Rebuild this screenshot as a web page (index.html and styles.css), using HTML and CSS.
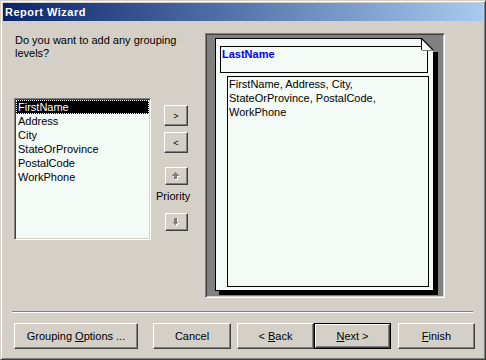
FILE: index.html
```html
<!DOCTYPE html>
<html lang="en">
<head>
    <meta charset="UTF-8">
    <title>Report Wizard</title>
    <link rel="stylesheet" href="styles.css">
</head>
<body>
    <div class="window">
        <div class="titlebar">Report Wizard</div>
        <div class="dialog">
            <div class="main">
                <div class="left">
                    <div class="question">Do you want to add any grouping<br>levels?</div>
                    <div class="picker">
                        <ul class="listbox">
                            <li class="selected"><span>FirstName</span></li>
                            <li>Address</li>
                            <li>City</li>
                            <li>StateOrProvince</li>
                            <li>PostalCode</li>
                            <li>WorkPhone</li>
                        </ul>
                        <div class="controls">
                            <button class="btn small add">&gt;</button>
                            <button class="btn small remove">&lt;</button>
                            <button class="btn arrow up">
                                <svg width="9" height="8" viewBox="0 0 9 8" shape-rendering="crispEdges">
                                    <polygon points="4.5,1 8,4.5 6,4.5 6,8 3,8 3,4.5 1,4.5" fill="#fff"/>
                                    <polygon points="3.5,0 7,3.5 5,3.5 5,7 2,7 2,3.5 0,3.5" fill="#808080"/>
                                </svg>
                            </button>
                            <div class="priority">Priority</div>
                            <button class="btn arrow down">
                                <svg width="9" height="8" viewBox="0 0 9 8" shape-rendering="crispEdges">
                                    <polygon points="3,1 6,1 6,4.5 8,4.5 4.5,8 1,4.5 3,4.5" fill="#fff"/>
                                    <polygon points="2,0 5,0 5,3.5 7,3.5 3.5,7 0,3.5 2,3.5" fill="#808080"/>
                                </svg>
                            </button>
                        </div>
                    </div>
                </div>
                <div class="preview">
                    <div class="page">
                        <svg class="fold" width="17" height="17" viewBox="0 0 17 17" shape-rendering="crispEdges">
                            <polygon points="0,0 17,0 17,14 12,14 12,12" fill="#808080"/>
                            <polygon points="0,0 12,12 0,12" fill="#fff"/>
                            <line x1="0" y1="0" x2="12" y2="12" stroke="#000" stroke-width="1.2" shape-rendering="auto"/>
                            <rect x="0" y="0" width="1" height="12" fill="#000"/>
                            <rect x="1" y="12" width="12" height="1" fill="#808080"/>
                        </svg>
                        <div class="group-header">LastName</div>
                        <div class="detail">FirstName, Address, City,<br>StateOrProvince, PostalCode,<br>WorkPhone</div>
                    </div>
                </div>
            </div>
            <div class="separator"></div>
            <div class="footer">
                <button class="btn wide options"><span>Grouping <u>O</u>ptions ...</span></button>
                <button class="btn wide cancel"><span>Cancel</span></button>
                <button class="btn wide back"><span>&lt; <u>B</u>ack</span></button>
                <button class="btn wide next">
                    <span class="inner"><span><u>N</u>ext &gt;</span></span>
                </button>
                <button class="btn wide finish"><span><u>F</u>inish</span></button>
            </div>
        </div>
    </div>
</body>
</html>
```

FILE: styles.css
```css
html, body {
    margin: 0;
    padding: 0;
    background: #d4d0c8;
}
body {
    font-family: 'Liberation Sans', Arial, sans-serif;
    font-size: 11px;
    color: #000;
}
.window {
    box-sizing: border-box;
    width: 486px;
    height: 360px;
    padding: 2px;
    background: #d4d0c8;
    border: 1px solid;
    border-color: #d4d0c8 #404040 #404040 #d4d0c8;
    box-shadow: inset 1px 1px #fff, inset -1px -1px #808080;
}
.titlebar {
    height: 18px;
    line-height: 18px;
    padding-left: 2px;
    color: #fff;
    font-weight: bold;
    letter-spacing: 0.5px;
    background: linear-gradient(to right, #0a246a, #a6caf0);
}
.main {
    display: flex;
    margin-top: 12px;
    padding-left: 11px;
}
.left {
    width: 191px;
    padding-top: 1px;
}
.question {
    padding-left: 1px;
    line-height: 13px;
}
.picker {
    display: flex;
    margin-top: 38px;
}
.listbox {
    box-sizing: border-box;
    width: 137px;
    height: 142px;
    margin: 0;
    list-style: none;
    background: #f4faf6;
    border: 1px solid;
    border-color: #808080 #fff #fff #808080;
    box-shadow: inset 1px 1px #404040, inset -1px -1px #d4d0c8;
    padding: 1px;
}
.listbox li {
    height: 14px;
    line-height: 14px;
    padding-left: 2px;
    white-space: nowrap;
}
.listbox li.selected {
    background: #000;
    color: #fff;
    outline: 1px dotted #fff;
    outline-offset: -1px;
}
.controls {
    display: flex;
    flex-direction: column;
    align-items: flex-start;
    width: 24px;
    margin-left: 13px;
}
.btn {
    box-sizing: border-box;
    display: flex;
    align-items: center;
    justify-content: center;
    padding: 0;
    margin: 0;
    font-family: inherit;
    font-size: 11px;
    color: #000;
    background: #d4d0c8;
    border: 1px solid;
    border-color: #fff #404040 #404040 #fff;
    box-shadow: inset -1px -1px #808080;
}
.btn.small {
    width: 24px;
    height: 21px;
    font-size: 9px;
}
.btn.add {
    margin-top: 7px;
}
.btn.remove {
    margin-top: 6px;
}
.btn.arrow {
    width: 23px;
    height: 18px;
    margin-left: 1px;
}
.btn.up {
    margin-top: 14px;
}
.priority {
    margin-top: 5px;
    margin-left: -8px;
    line-height: 13px;
}
.btn.down {
    margin-top: 10px;
}
.preview {
    box-sizing: border-box;
    width: 240px;
    height: 265px;
    padding: 4px 0 0 9px;
    background: #808080;
    border: 1px solid;
    border-color: #808080 #fff #fff #808080;
    box-shadow: inset 1px 1px #404040, inset -1px -1px #d4d0c8;
}
.page {
    position: relative;
    box-sizing: border-box;
    width: 219px;
    height: 253px;
    padding: 7px 0 0 4px;
    background: #f4faf6;
    border: 1px solid #000;
    box-shadow: 4px 4px 0 #000;
}
.fold {
    position: absolute;
    top: -1px;
    right: -5px;
}
.group-header {
    box-sizing: border-box;
    width: 208px;
    height: 27px;
    padding: 1px 0 0 1px;
    line-height: 13px;
    color: #0000ff;
    font-weight: bold;
    border: 1px solid #000;
}
.detail {
    box-sizing: border-box;
    width: 202px;
    height: 211px;
    margin: 3px 0 0 7px;
    padding: 0 1px;
    line-height: 14px;
    border: 1px solid #000;
}
.separator {
    width: 461px;
    height: 1px;
    margin: 13px 0 0 9px;
    background: #808080;
    border-bottom: 1px solid #fff;
}
.footer {
    display: flex;
    margin: 10px 0 0 11px;
}
.btn.wide {
    width: 77px;
    height: 26px;
}
.btn.options {
    width: 124px;
}
.btn.cancel {
    width: 78px;
    margin-left: 15px;
}
.btn.back {
    margin-left: 6px;
}
.btn.next {
    border: 1px solid #000;
    box-shadow: none;
    padding: 0;
}
.btn.next .inner {
    box-sizing: border-box;
    display: flex;
    align-items: center;
    justify-content: center;
    width: 100%;
    height: 100%;
    border: 1px solid;
    border-color: #fff #404040 #404040 #fff;
    box-shadow: inset -1px -1px #808080;
}
.btn.finish {
    margin-left: 7px;
}
```
